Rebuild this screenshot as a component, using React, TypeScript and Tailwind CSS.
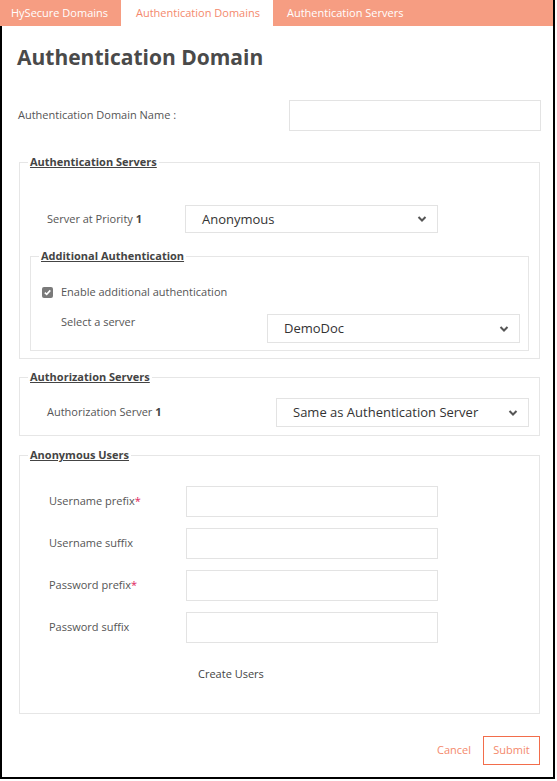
import { ReactNode } from 'react';

const font = { fontFamily: '"Open Sans", "Noto Sans", sans-serif' };

function Chevron() {
  return (
    <svg width="10" height="7" viewBox="0 0 10 7" className="absolute right-[10px] top-1/2 -translate-y-1/2">
      <path d="M1.5 1.5 L5 5 L8.5 1.5" fill="none" stroke="#555" strokeWidth="2" />
    </svg>
  );
}

function FakeSelect({ value, className }: { value: string; className: string }) {
  return (
    <div className={`relative border border-[#e3e3e3] bg-white flex items-center pl-4 text-[13px] text-[#333] ${className}`}>
      {value}
      <Chevron />
    </div>
  );
}

function Section({ title, className, children }: { title: string; className?: string; children: ReactNode }) {
  return (
    <fieldset className={`border border-[#e6e6e6] ${className ?? ''}`}>
      <legend className="ml-[8px] px-[2px] text-[11px] leading-[14px] font-bold text-[#444] underline">{title}</legend>
      {children}
    </fieldset>
  );
}

function TextRow({ label, required }: { label: string; required?: boolean }) {
  return (
    <div className="flex items-center">
      <span className="w-[166px] pl-[29px] text-[11px] text-[#555]">
        {label}
        {required && <span className="text-[#e0245e]">*</span>}
      </span>
      <div className="w-[252px] h-[31px] border border-[#e3e3e3] bg-white" />
    </div>
  );
}

export default function App() {
  return (
    <div className="w-[555px] h-[779px] flex flex-col border-r-2 border-black bg-white" style={font}>
      <div className="flex h-[26px] bg-[#f69d82] text-[11px] shrink-0">
        <div className="w-[121px] pl-[11px] flex items-center text-white">HySecure Domains</div>
        <div className="w-[152px] pl-[15px] flex items-center bg-white text-[#f4896c]">Authentication Domains</div>
        <div className="pl-[14px] flex items-center text-white">Authentication Servers</div>
      </div>
      <div className="flex-1 border-l-2 border-b-2 border-black pl-[17px] pr-[13px]">
        <h1 className="mt-[16px] -ml-[2px] text-[21px] leading-[30px] font-bold text-[#4a4a4a]">Authentication Domain</h1>
        <div className="mt-[28px] flex items-center">
          <span className="-ml-[1px] text-[11px] text-[#555]">Authentication Domain Name :</span>
          <div className="ml-auto -mr-[1px] w-[252px] h-[31px] border border-[#e3e3e3]" />
        </div>

        <Section title="Authentication Servers" className="mt-[24px]">
          <div className="px-[10px] pb-[7px]">
            <div className="mt-[36px] flex items-center">
              <span className="w-[155px] pl-[17px] text-[11px] text-[#555]">
                Server at Priority <b className="text-[#444]">1</b>
              </span>
              <FakeSelect value="Anonymous" className="w-[253px] h-[28px] pt-[2px]" />
            </div>
            <Section title="Additional Authentication" className="mt-[16px]">
              <div className="pr-[8px] pb-[7px]">
                <div className="mt-[21px] ml-[11px] flex items-center h-[16px]">
                  <span className="w-[11px] h-[11px] rounded-[2px] bg-[#7a7a7a] flex items-center justify-center">
                    <svg width="9" height="9" viewBox="0 0 9 9">
                      <path d="M1.8 4.6 L3.7 6.4 L7.3 2.4" fill="none" stroke="#fff" strokeWidth="1.6" />
                    </svg>
                  </span>
                  <span className="ml-[8px] text-[11px] text-[#555]">Enable additional authentication</span>
                </div>
                <div className="mt-[14px] flex items-start">
                  <span className="pl-[30px] text-[11px] leading-[16px] text-[#555]">Select a server</span>
                  <FakeSelect value="DemoDoc" className="ml-auto w-[253px] h-[29px]" />
                </div>
              </div>
            </Section>
          </div>
        </Section>

        <Section title="Authorization Servers" className="mt-[11px]">
          <div className="pr-[10px] pb-[8px]">
            <div className="mt-[14px] flex items-center">
              <span className="pl-[27px] text-[11px] text-[#555]">
                Authorization Server <b className="text-[#444]">1</b>
              </span>
              <FakeSelect value="Same as Authentication Server" className="ml-auto w-[253px] h-[29px]" />
            </div>
          </div>
        </Section>

        <Section title="Anonymous Users" className="mt-[12px]">
          <div className="pb-[31px]">
            <div className="mt-[24px] flex flex-col gap-[11px]">
              <TextRow label="Username prefix" required />
              <TextRow label="Username suffix" />
              <TextRow label="Password prefix" required />
              <TextRow label="Password suffix" />
            </div>
            <div className="mt-[23px] pl-[178px] text-[11px] leading-[16px] text-[#444]">Create Users</div>
          </div>
        </Section>

        <div className="mt-[22px] flex items-center justify-end gap-[12px]">
          <span className="text-[11px] text-[#f4896c]">Cancel</span>
          <button className="w-[57px] h-[29px] border border-[#f26d4b] text-[11px] text-[#f4896c]">Submit</button>
        </div>
      </div>
    </div>
  );
}
